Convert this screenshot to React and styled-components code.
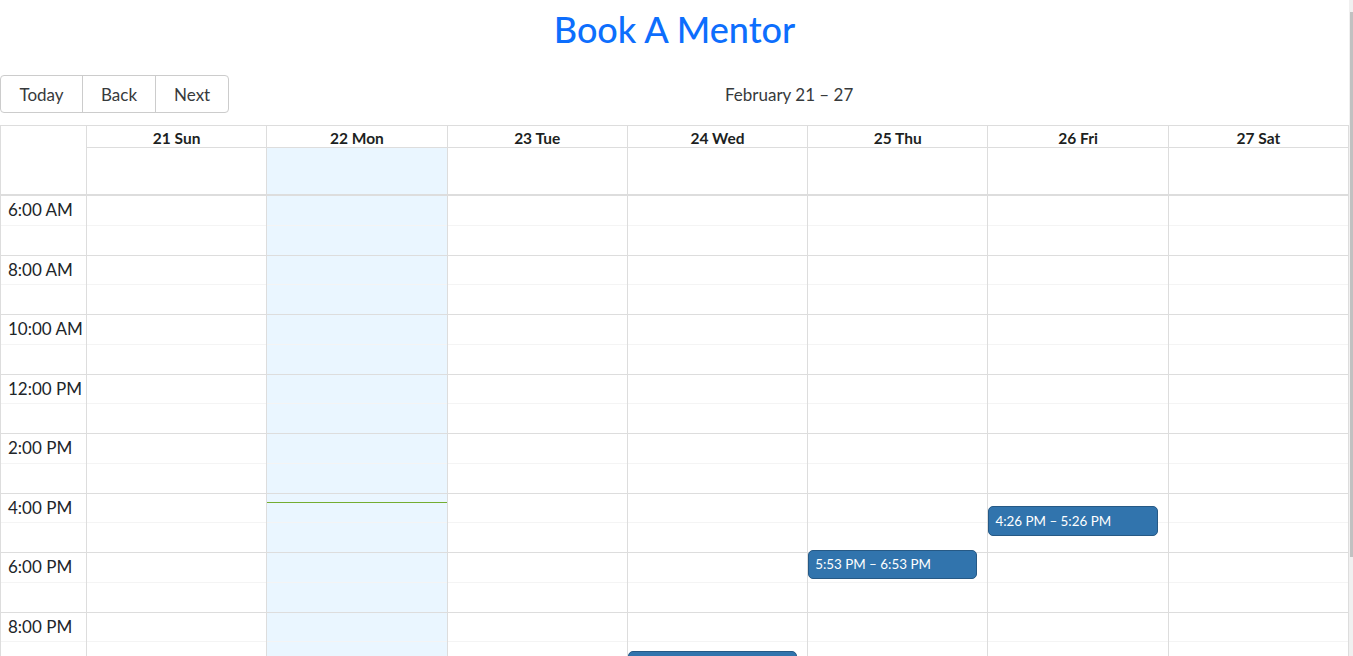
import React from "react";
import styled, { createGlobalStyle } from "styled-components";

const GlobalStyle = createGlobalStyle`
  html, body {
    margin: 0;
    padding: 0;
    overflow: hidden;
    background: #fff;
  }
  body {
    font-family: Lato, "Open Sans", "Noto Sans", sans-serif;
    font-size: 16px;
    color: #212529;
  }
  * { box-sizing: border-box; }
`;

const HOUR_PX = 29.75;
const START_HOUR = 6;

const Page = styled.div`
  display: flex;
  width: 1353px;
  height: 656px;
  overflow: hidden;
`;

const Main = styled.div`
  width: 1349px;
  flex: none;
  display: flex;
  flex-direction: column;
`;

const ScrollTrack = styled.div`
  width: 4px;
  flex: none;
  background: #f0f0f0;
  padding-top: 12px;
  display: flex;
  justify-content: flex-end;
`;

const ScrollThumb = styled.div`
  width: 3px;
  height: 545px;
  background: #c1c1c1;
`;

const Title = styled.h1`
  flex: none;
  margin: 6px 0 21px;
  height: 48px;
  line-height: 46px;
  text-align: center;
  font-size: 36px;
  font-weight: 500;
  color: #0d6efd;
`;

const Toolbar = styled.div`
  flex: none;
  display: flex;
  align-items: center;
  height: 38px;
  margin-bottom: 12px;
  font-size: 16px;
`;

const ButtonGroup = styled.div`
  display: flex;
`;

const ToolButton = styled.button`
  height: 38px;
  padding: 0 18px;
  min-width: ${(p) => p.$w}px;
  font-family: inherit;
  font-size: 17px;
  color: #373a3c;
  background: none;
  border: 1px solid #ccc;
  margin-left: -1px;
  border-radius: 0;
  cursor: pointer;
  &:first-child {
    margin-left: 0;
    border-radius: 4px 0 0 4px;
  }
  &:last-child {
    border-radius: 0 4px 4px 0;
  }
`;

const Label = styled.span`
  flex: 1;
  text-align: center;
  padding: 0 10px;
  color: #373a3c;
  font-size: 17px;
`;

const Calendar = styled.div`
  border: 1px solid #ddd;
  border-bottom: none;
  display: flex;
  flex-direction: column;
`;

const Header = styled.div`
  display: grid;
  grid-template-columns: 85px repeat(7, 1fr);
  grid-template-rows: 22px 46px;
  border-bottom: 2px solid #ddd;
`;

const HeaderGutter = styled.div`
  grid-row: 1 / span 2;
`;

const HeaderCell = styled.div`
  border-left: 1px solid #ddd;
  border-bottom: 1px solid #ddd;
  text-align: center;
  font-weight: 700;
  font-size: 15.5px;
  line-height: 21px;
  padding: 2px 3px 0;
  color: #1d1f22;
`;

const AllDayCell = styled.div`
  border-left: 1px solid #ddd;
  background: ${(p) => (p.$today ? "#eaf6ff" : "transparent")};
`;

const Body = styled.div`
  display: grid;
  grid-template-columns: 85px repeat(7, 1fr);
`;

const Column = styled.div`
  position: relative;
  display: flex;
  flex-direction: column;
  border-left: ${(p) => (p.$gutter ? "none" : "1px solid #ddd")};
  background: ${(p) => (p.$today ? "#eaf6ff" : "transparent")};
`;

const Group = styled.div`
  height: ${HOUR_PX * 2}px;
  flex: none;
  border-bottom: 1px solid #ddd;
  display: flex;
  flex-direction: column;
`;

const Slot = styled.div`
  flex: 1;
  & + & {
    border-top: 1px solid ${(p) => (p.$gutter ? "transparent" : "#f4f4f4")};
  }
`;

const TimeLabel = styled.span`
  display: block;
  padding: 4px 7px 0;
  font-size: 17px;
  color: #212529;
  line-height: 20px;
  white-space: nowrap;
`;

const Events = styled.div`
  position: absolute;
  inset: 0 10px 0 0;
`;

const Event = styled.div`
  position: absolute;
  left: 0;
  right: 0;
  background: #3174ad;
  border: 1px solid #265985;
  border-radius: 5px;
  color: #fff;
  font-size: 13.4px;
  padding: 0 6px;
  display: flex;
  align-items: center;
  overflow: hidden;
  white-space: nowrap;
`;

const NowLine = styled.div`
  position: absolute;
  left: 0;
  right: 0;
  height: 1px;
  background: #74ad31;
`;

const days = ["21 Sun", "22 Mon", "23 Tue", "24 Wed", "25 Thu", "26 Fri", "27 Sat"];
const groups = ["6:00 AM", "8:00 AM", "10:00 AM", "12:00 PM", "2:00 PM", "4:00 PM", "6:00 PM", "8:00 PM"];

const events = [
  { day: 5, start: 16 + 26 / 60, label: "4:26 PM – 5:26 PM" },
  { day: 4, start: 17 + 53 / 60, label: "5:53 PM – 6:53 PM" },
  { day: 3, start: 21 + 17 / 60, label: "" },
];

const topFor = (h) => (h - START_HOUR) * HOUR_PX;

export default function App() {
  return (
    <>
      <GlobalStyle />
      <Page>
        <Main>
          <Title>Book A Mentor</Title>
          <Toolbar>
            <ButtonGroup>
              <ToolButton $w={83}>Today</ToolButton>
              <ToolButton $w={73}>Back</ToolButton>
              <ToolButton $w={74}>Next</ToolButton>
            </ButtonGroup>
            <Label>February 21 – 27</Label>
          </Toolbar>
          <Calendar>
            <Header>
              <HeaderGutter />
              {days.map((d) => (
                <HeaderCell key={d}>{d}</HeaderCell>
              ))}
              {days.map((d, i) => (
                <AllDayCell key={d} $today={i === 1} />
              ))}
            </Header>
            <Body>
              <Column $gutter>
                {groups.map((g) => (
                  <Group key={g}>
                    <Slot $gutter>
                      <TimeLabel>{g}</TimeLabel>
                    </Slot>
                    <Slot $gutter />
                  </Group>
                ))}
              </Column>
              {days.map((d, i) => (
                <Column key={d} $today={i === 1}>
                  {groups.map((g) => (
                    <Group key={g}>
                      <Slot />
                      <Slot />
                    </Group>
                  ))}
                  <Events>
                    {events
                      .filter((e) => e.day === i)
                      .map((e, k) => (
                        <Event
                          key={k}
                          style={{ top: topFor(e.start), height: HOUR_PX }}
                        >
                          {e.label}
                        </Event>
                      ))}
                  </Events>
                  {i === 1 && <NowLine style={{ top: topFor(16 + 18 / 60) }} />}
                </Column>
              ))}
            </Body>
          </Calendar>
        </Main>
        <ScrollTrack>
          <ScrollThumb />
        </ScrollTrack>
      </Page>
    </>
  );
}
